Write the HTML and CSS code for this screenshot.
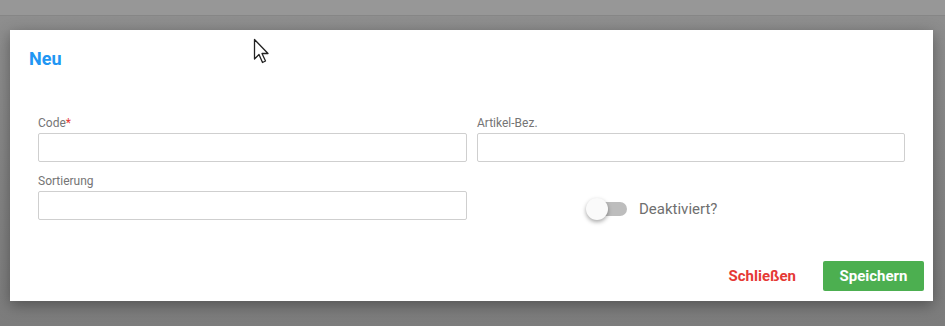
FILE: index.html
```html
<!DOCTYPE html>
<html lang="de">
<head>
    <meta charset="UTF-8">
    <title>Neu</title>
    <link rel="stylesheet" href="styles.css">
</head>
<body>
    <div class="topbar"></div>

    <!-- Dialog -->
    <div class="dialog">
        <h2 class="dialog-title">Neu</h2>

        <form class="dialog-form">
            <div class="field">
                <label>Code<span class="req">*</span></label>
                <input type="text">
            </div>
            <div class="field">
                <label>Artikel-Bez.</label>
                <input type="text">
            </div>
            <div class="field">
                <label>Sortierung</label>
                <input type="text">
            </div>
            <div class="field toggle-field">
                <span class="switch">
                    <span class="track"></span>
                    <span class="knob"></span>
                </span>
                <span class="toggle-label">Deaktiviert?</span>
            </div>
        </form>

        <div class="dialog-actions">
            <button class="btn-close">Schließen</button>
            <button class="btn-save">Speichern</button>
        </div>
    </div>

    <!-- Mouse pointer -->
    <svg class="cursor" width="22" height="30" viewBox="0 0 22 30">
        <path d="M1.5 1.5 L1.5 21 L6 16.5 L9.5 24.5 L12.5 23 L9 15.5 L15 15.5 Z" fill="#fff" stroke="#222" stroke-width="1.3" stroke-linejoin="round"/>
    </svg>
</body>
</html>
```

FILE: styles.css
```css
/* Basic Styles */
body {
    font-family: Roboto, "Liberation Sans", Arial, sans-serif;
    margin: 0;
    padding: 0;
    height: 326px;
    overflow: hidden;
    background: linear-gradient(#8f8f8f, #7c7c7c);
    position: relative;
}

.topbar {
    height: 15px;
    background-color: #979797;
    border-bottom: 1px solid #868686;
    margin-bottom: 14px;
}

/* Dialog */
.dialog {
    margin-left: 10px;
    width: 923px;
    height: 271px;
    box-sizing: border-box;
    background-color: #fff;
    box-shadow: 0 4px 14px rgba(0, 0, 0, 0.35);
    display: flex;
    flex-direction: column;
    padding: 0 28px 10px 28px;
}

.dialog-title {
    margin: 18px 0 0 -9px;
    font-size: 18px;
    font-weight: 700;
    color: #2196f3;
    line-height: 22px;
}

.dialog-form {
    display: grid;
    grid-template-columns: 429px 428px;
    column-gap: 10px;
    row-gap: 12px;
    margin-top: 46px;
}

.field label {
    display: block;
    font-size: 12px;
    color: #757575;
    line-height: 14px;
    margin-bottom: 3px;
}

.req {
    color: #e53935;
}

.field input {
    display: block;
    width: 100%;
    height: 29px;
    box-sizing: border-box;
    border: 1px solid #cfcfcf;
    border-radius: 2px;
    padding: 4px 8px;
    font-size: 13px;
}

/* Toggle */
.toggle-field {
    display: flex;
    align-items: center;
    padding: 23px 0 0 110px;
}

.switch {
    position: relative;
    width: 40px;
    height: 22px;
    display: inline-block;
}

.track {
    position: absolute;
    left: 4px;
    right: 0;
    top: 4px;
    height: 14px;
    border-radius: 7px;
    background-color: #bdbdbd;
}

.knob {
    position: absolute;
    left: -1px;
    top: 0;
    width: 22px;
    height: 22px;
    border-radius: 50%;
    background-color: #fafafa;
    box-shadow: 0 2px 4px rgba(0, 0, 0, 0.35);
}

.toggle-label {
    margin-left: 12px;
    font-size: 15px;
    color: #6f6f6f;
}

/* Actions */
.dialog-actions {
    margin-top: auto;
    display: flex;
    justify-content: flex-end;
    align-items: center;
    margin-right: -19px;
}

.dialog-actions button {
    font-family: Roboto, "Liberation Sans", Arial, sans-serif;
    font-size: 15px;
    font-weight: 700;
    border: none;
    cursor: pointer;
    height: 30px;
    border-radius: 2px;
}

.btn-close {
    background: none;
    color: #e53935;
    padding: 0 10px;
    margin-right: 17px;
}

.btn-save {
    background-color: #4caf50;
    color: #fff;
    width: 101px;
}

.cursor {
    position: absolute;
    left: 253px;
    top: 38px;
}
```
